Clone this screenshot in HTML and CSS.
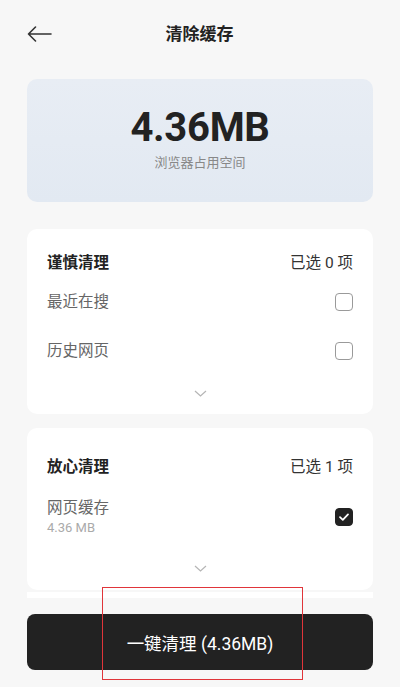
FILE: index.html
```html
<!DOCTYPE html>
<html lang="zh-CN">
<head>
<meta charset="utf-8">
<title>清除缓存</title>
<link rel="stylesheet" href="styles.css">
</head>
<body>
<div class="page">
  <header class="header">
    <svg class="back" width="25" height="16" viewBox="0 0 25 16"><path d="M24 8H1.5M8.5 1L1.5 8l7 7" fill="none" stroke="#333" stroke-width="1.6" stroke-linecap="round" stroke-linejoin="round"/></svg>
    <h1 class="title">清除缓存</h1>
    <span></span>
  </header>

  <section class="storage">
    <div class="size">4.36MB</div>
    <div class="size-label">浏览器占用空间</div>
  </section>

  <section class="card card-first">
    <div class="card-head"><span class="card-title">谨慎清理</span><span class="count">已选 0 项</span></div>
    <div class="row"><span class="row-name">最近在搜</span><span class="box"></span></div>
    <div class="row"><span class="row-name">历史网页</span><span class="box"></span></div>
    <div class="more"><svg width="13" height="7" viewBox="0 0 13 7"><path d="M1 1l5.5 5 5.5-5" fill="none" stroke="#b5b5b5" stroke-width="1.2"/></svg></div>
  </section>

  <section class="card card-second">
    <div class="card-head"><span class="card-title">放心清理</span><span class="count">已选 1 项</span></div>
    <div class="row row-tall">
      <div class="row-text"><span class="row-name">网页缓存</span><span class="row-sub">4.36 MB</span></div>
      <span class="box box-on"><svg width="12" height="10" viewBox="0 0 12 10"><path d="M2 5.2l2.8 2.6L10 2.4" fill="none" stroke="#fff" stroke-width="1.8" stroke-linecap="round" stroke-linejoin="round"/></svg></span>
    </div>
    <div class="more more-second"><svg width="13" height="7" viewBox="0 0 13 7"><path d="M1 1l5.5 5 5.5-5" fill="none" stroke="#b5b5b5" stroke-width="1.2"/></svg></div>
  </section>
  <div class="peek"></div>

  <footer class="footer">
    <button class="clean">一键清理 (4.36MB)</button>
  </footer>

  <div class="highlight"></div>
</div>
</body>
</html>
```

FILE: styles.css
```css
* { box-sizing: border-box; }
html, body { margin: 0; padding: 0; }
body {
  background: #f7f7f7;
  font-family: Roboto, "Noto Sans CJK SC", sans-serif;
  color: #222;
}
.page {
  position: relative;
  width: 400px;
  height: 687px;
  overflow: hidden;
  display: flex;
  flex-direction: column;
}
.header {
  height: 68px;
  display: grid;
  grid-template-columns: 1fr auto 1fr;
  align-items: center;
  padding: 0 28px 0 27px;
}
.back { display: block; }
.title {
  margin: 0;
  font-size: 17px;
  font-weight: 700;
  color: #222;
  line-height: 1;
}
.storage {
  margin: 11px 27px 0;
  height: 123px;
  border-radius: 10px;
  background: linear-gradient(180deg, #e8edf4 0%, #e2e9f2 100%);
  display: flex;
  flex-direction: column;
  align-items: center;
  padding-top: 27px;
}
.size {
  font-size: 40px;
  font-weight: 700;
  line-height: 44px;
  color: #222;
  letter-spacing: -0.3px;
}
.size-label {
  margin-top: 5px;
  font-size: 13px;
  line-height: 16px;
  color: #888;
}
.card {
  margin: 0 27px;
  background: #fff;
  border-radius: 10px;
  padding: 0 20px;
}
.card-first {
  margin-top: 27px;
  height: 185px;
  padding-top: 15px;
}
.card-first .card-head { height: 33px; }
.card-second {
  margin-top: 14px;
  height: 162px;
  padding-top: 21px;
}
.card-head {
  height: 32px;
  display: flex;
  justify-content: space-between;
  align-items: center;
}
.card-title {
  font-size: 15.5px;
  font-weight: 700;
  color: #222;
}
.count {
  font-size: 15.5px;
  color: #333;
}
.row {
  height: 49px;
  display: flex;
  justify-content: space-between;
  align-items: center;
}
.row-tall { height: 72px; }
.row-text {
  display: flex;
  flex-direction: column;
}
.row-name {
  font-size: 15.5px;
  color: #666;
  line-height: 20px;
}
.row-sub {
  font-size: 13px;
  color: #aaa;
  line-height: 16px;
  margin-top: 2.5px;
}
.box {
  width: 18px;
  height: 18px;
  border: 1.5px solid #9a9a9a;
  border-radius: 4px;
  flex: none;
}
.box-on {
  background: #222;
  border-color: #222;
  display: flex;
  align-items: center;
  justify-content: center;
}
.box-on svg { display: block; }
.more {
  height: 36px;
  display: flex;
  align-items: center;
  justify-content: center;
}
.more-second { height: 30px; }
.more svg { display: block; }
.peek {
  margin: 2px 27px 0;
  height: 6px;
  background: #fff;
}
.footer {
  flex: 1;
  padding: 16px 27px 0;
  background: #f7f7f7;
}
.clean {
  width: 100%;
  height: 56px;
  border: none;
  border-radius: 8px;
  background: #222;
  color: #fff;
  font-family: Roboto, "Noto Sans CJK SC", sans-serif;
  font-size: 17.5px;
  padding: 0;
}
.highlight {
  position: absolute;
  left: 102px;
  top: 587px;
  width: 201px;
  height: 93px;
  border: 1.5px solid #e0353a;
  pointer-events: none;
}
```
